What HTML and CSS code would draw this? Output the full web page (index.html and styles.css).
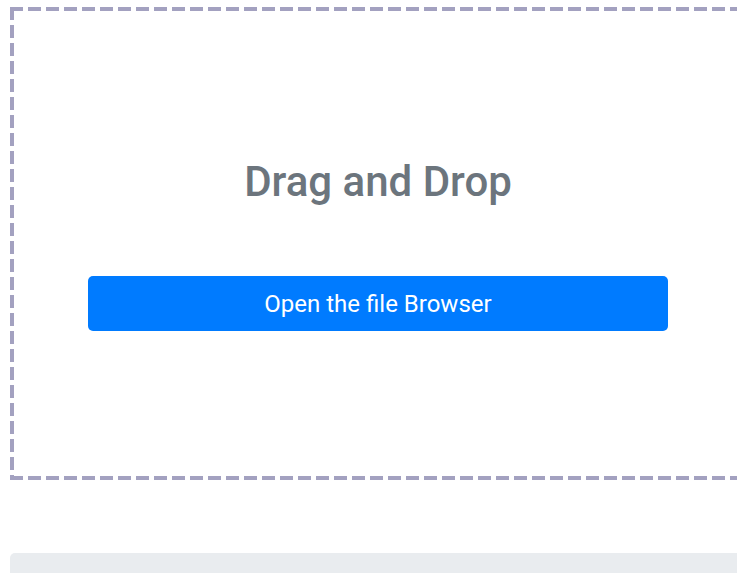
FILE: index.html
```html
<!DOCTYPE html>
<html lang="en">
<head>
<meta charset="utf-8">
<title>Upload</title>
<link rel="stylesheet" href="styles.css">
</head>
<body>
  <main class="page">
    <section class="dropzone">
      <h2 class="dropzone-title">Drag and Drop</h2>
      <button class="browse-btn" type="button">Open the file Browser</button>
    </section>
    <div class="file-list"></div>
  </main>
</body>
</html>
```

FILE: styles.css
```css
html, body {
  margin: 0;
  padding: 0;
  background: #ffffff;
  overflow: hidden;
}

body {
  font-family: Roboto, "Liberation Sans", sans-serif;
}

.page {
  padding: 7px 0 0 10px;
  width: 736px;
  display: flex;
  flex-direction: column;
  gap: 73px;
}

/* dashed frame drawn with repeating gradients on each edge */
.dropzone {
  --dash: #a3a1c0;
  box-sizing: border-box;
  width: 736px;
  height: 473px;
  padding: 4px;
  display: flex;
  flex-direction: column;
  align-items: center;
  background:
    repeating-linear-gradient(to right, var(--dash) 0 13px, transparent 13px 18px) top left / 100% 4px no-repeat,
    repeating-linear-gradient(to right, var(--dash) 0 13px, transparent 13px 18px) bottom left / 100% 4px no-repeat,
    repeating-linear-gradient(to bottom, var(--dash) 0 13px, transparent 13px 18px) top left / 4px 100% no-repeat,
    repeating-linear-gradient(to bottom, var(--dash) 0 13px, transparent 13px 18px) top right / 4px 100% no-repeat,
    #ffffff;
}

.dropzone-title {
  margin: 146px 0 0;
  font-size: 42px;
  line-height: 50px;
  font-weight: 500;
  color: #6c757d;
}

.browse-btn {
  margin-top: 69px;
  width: 580px;
  height: 55px;
  border: 0;
  border-radius: 5px;
  background: #007bff;
  color: #ffffff;
  font-family: Roboto, "Liberation Sans", sans-serif;
  font-size: 24px;
  font-weight: 400;
  cursor: pointer;
}

.file-list {
  height: 40px;
  background: #e9ecef;
  border-radius: 5px 0 0 0;
}
```
